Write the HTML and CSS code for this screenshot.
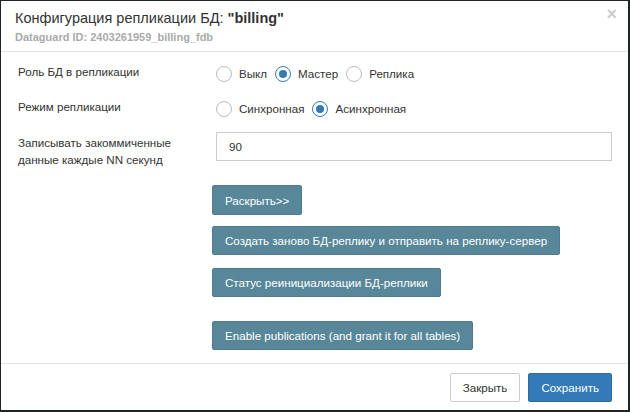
FILE: index.html
```html
<!DOCTYPE html>
<html>
<head>
<meta charset="utf-8">
<link rel="stylesheet" href="styles.css">
</head>
<body>
<div class="modal">
  <div class="modal-header">
    <div class="titles">
      <div class="title">Конфигурация репликации БД: <b>"billing"</b></div>
      <div class="subtitle">Dataguard ID: 2403261959_billing_fdb</div>
    </div>
    <span class="close">×</span>
  </div>
  <div class="modal-body">
    <div class="row row-radio">
      <div class="label">Роль БД в репликации</div>
      <div class="control radios">
        <label class="radio"><span class="circle"></span>Выкл</label>
        <label class="radio"><span class="circle checked"></span>Мастер</label>
        <label class="radio"><span class="circle"></span>Реплика</label>
      </div>
    </div>
    <div class="row row-radio row2">
      <div class="label">Режим репликации</div>
      <div class="control radios">
        <label class="radio"><span class="circle"></span>Синхронная</label>
        <label class="radio"><span class="circle checked"></span>Асинхронная</label>
      </div>
    </div>
    <div class="row row-input">
      <div class="label two">Записывать закоммиченные<br>данные каждые NN секунд</div>
      <div class="control"><div class="input">90</div></div>
    </div>
    <div class="actions">
      <button class="btn-teal b1">Раскрыть&gt;&gt;</button>
      <button class="btn-teal b2">Создать заново БД-реплику и отправить на реплику-сервер</button>
      <button class="btn-teal b3">Статус реинициализации БД-реплики</button>
      <button class="btn-teal b4">Enable publications (and grant it for all tables)</button>
    </div>
  </div>
  <div class="modal-footer">
    <button class="btn-default">Закрыть</button>
    <button class="btn-primary">Сохранить</button>
  </div>
</div>
</body>
</html>
```
FILE: styles.css
```css
* { box-sizing: border-box; }
html, body { margin: 0; padding: 0; }
body {
  background: #1e2624;
  width: 630px;
  height: 412px;
  overflow: hidden;
  font-family: "Liberation Sans", Arial, sans-serif;
  font-size: 11.6px;
  color: #333;
  padding: 1px 2px 2px 1px;
}
.modal {
  background: #fff;
  width: 627px;
  height: 409px;
  display: flex;
  flex-direction: column;
}
.modal-header {
  height: 51px;
  flex: none;
  border-bottom: 1px solid #e5e5e5;
  display: flex;
  justify-content: space-between;
  padding: 8px 14px 0 14px;
}
.title {
  font-size: 14.5px;
  line-height: 18px;
  color: #333;
}
.title b { font-weight: bold; }
.subtitle {
  font-size: 11px;
  font-weight: bold;
  line-height: 14px;
  color: #aaa;
  margin-top: 3px;
}
.close {
  font-size: 18px;
  font-weight: bold;
  color: #ccc;
  line-height: 18px;
  margin-top: -4px;
  margin-right: -3px;
}
.modal-body {
  height: 312px;
  flex: none;
  padding: 0 16px 0 17px;
  border-bottom: 1px solid #e5e5e5;
}
.row { display: flex; }
.label { width: 198px; flex: none; }
.control { flex: 1; }
.row-radio { height: 16px; align-items: center; margin-top: 14px; }
.row-radio .label { align-self: flex-start; line-height: 16px; margin-top: -2px; }
.row2 { margin-top: 19px; }
.radios { display: flex; align-items: center; }
.radio { display: flex; align-items: center; margin-right: 8px; line-height: 16px; }
.circle {
  width: 16px; height: 16px;
  border: 1px solid #bdbdbd;
  border-radius: 50%;
  margin-right: 7px;
  display: flex; align-items: center; justify-content: center;
}
.circle.checked { border: 1px solid #337ab7; }
.circle.checked::after {
  content: "";
  width: 8px; height: 8px;
  border-radius: 50%;
  background: #337ab7;
}
.row-input { margin-top: 15px; height: 29px; }
.label.two { line-height: 17px; padding-top: 2px; }
.input {
  height: 29px;
  border: 1px solid #ccc;
  padding: 0 12px;
  line-height: 27px;
  color: #333;
}
.actions {
  display: flex; flex-direction: column; align-items: flex-start;
  padding-left: 194px;
  margin-top: 24px;
}
button { font-family: "Liberation Sans", Arial, sans-serif; font-size: 11.6px; }
.btn-teal {
  background: #578799;
  color: #fff;
  border: 1px solid #4f7d8e;
  border-radius: 2px;
  height: 29px;
  padding: 0 12px;
}
.b1 { height: 30px; }
.b2 { margin-top: 11px; }
.b3 { margin-top: 13px; }
.b4 { margin-top: 24px; }
.modal-footer {
  flex: 1;
  display: flex;
  justify-content: flex-end;
  align-items: flex-start;
  padding: 9px 16px 0 0;
  gap: 8px;
}
.btn-default {
  background: #fff;
  border: 1px solid #ccc;
  border-radius: 2px;
  color: #333;
  height: 29px;
  padding: 0 12px;
}
.btn-primary {
  background: #337ab7;
  border: 1px solid #2e6da4;
  border-radius: 2px;
  color: #fff;
  height: 29px;
  padding: 0 12px;
}
```
